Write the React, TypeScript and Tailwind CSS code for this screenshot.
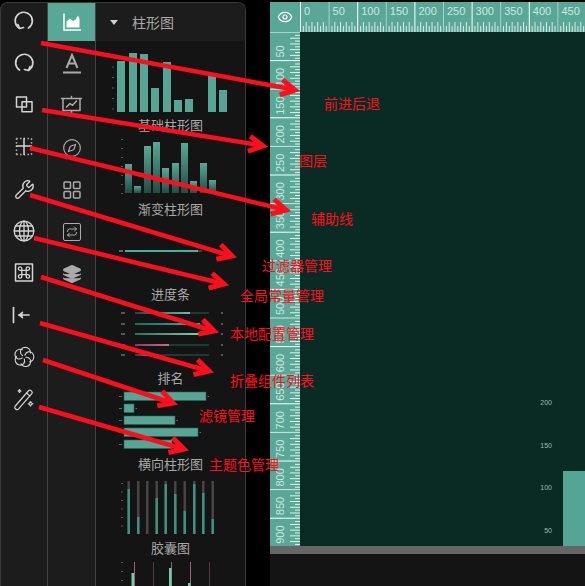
import React from "react";
import { Compass, Eye, Layers, Repeat, Wrench } from "lucide-react";

const TEAL = "#56a595";

const iconProps = {
  width: 24,
  height: 24,
  viewBox: "0 0 24 24",
  fill: "none",
  stroke: "currentColor",
  strokeWidth: 1.5,
  strokeLinecap: "round" as const,
  strokeLinejoin: "round" as const,
};

const UndoIcon = () => (
  <svg {...iconProps} strokeWidth={1.7}>
    <path d="M16.500 19A8.600 8.600 0 1 0 7.500 19.300" />
    <path d="M6 15.600 7.500 19.500l4-1" />
  </svg>
);

const RedoIcon = () => (
  <svg {...iconProps} strokeWidth={1.7}>
    <path d="M7.500 19A8.600 8.600 0 1 1 16.500 19.300" />
    <path d="M18 15.600 16.500 19.500l-4-1" />
  </svg>
);

const CopyIcon = () => (
  <svg {...iconProps}>
    <rect x="4.500" y="4" width="10" height="10" />
    <rect x="10" y="8.800" width="10" height="10" />
  </svg>
);

const GuideIcon = () => (
  <svg {...iconProps}>
    <path d="M12 3.500v16M4.500 11h15" />
    <path
      d="M4.500 3.500h15M4.500 19.500h15M4.500 3.500v16M19.500 3.500v16"
      strokeDasharray="1.200 2.500"
      strokeLinecap="butt"
    />
  </svg>
);

const GlobeIcon = () => (
  <svg {...iconProps} strokeWidth={1.3}>
    <circle cx="12" cy="12" r="9.800" />
    <ellipse cx="12" cy="12" rx="4.500" ry="9.800" />
    <path d="M12 2.200v19.600M2.200 12h19.600M3.500 7h17M3.500 17h17" />
  </svg>
);

const CommandIcon = () => (
  <svg {...iconProps} strokeWidth={1.3}>
    <rect x="3.500" y="3" width="17" height="17" strokeWidth={1.5} />
    <path d="M9.800 9.300h4.400v4.400H9.800zM9.800 9.300H8.500a1.700 1.700 0 1 1 1.300-1.700zM14.200 9.300V7.600a1.700 1.700 0 1 1 1.700 1.700zM14.200 13.700h1.700a1.700 1.700 0 1 1-1.700 1.700zM9.800 13.700v1.700a1.700 1.700 0 1 1-1.700-1.700z" />
  </svg>
);

const CollapseIcon = () => (
  <svg {...iconProps}>
    <path d="M1.500 4.500v15" strokeWidth={1.700} />
    <path d="M17 12H7" strokeWidth={1.700} />
    <path d="M10.500 9.300 7 12l3.500 2.700" fill="currentColor" />
  </svg>
);

const FlowerIcon = () => (
  <svg {...iconProps} strokeWidth={1.1}>
    {[0, 72, 144, 216, 288].map((deg) => (
      <path
        key={deg}
        transform={`rotate(${deg} 12 12)`}
        d="M10.600 10.600C7.500 8.500 7.700 4.400 11 2.800c3-1.300 6.500.3 7.300 3.400.2.800.2 1.300.1 2"
      />
    ))}
  </svg>
);

const WandIcon = () => (
  <svg {...iconProps} strokeWidth={1.200}>
    <path d="M3.300 19 16.300 4a2.200 2.200 0 0 1 3.300 2.900L6.600 21.900a2.200 2.200 0 0 1-3.300-2.900z" />
    <path d="m14.500 6 3.300 2.900" />
    <path d="M18.500 14.500c.4 1.300 1 1.900 2.300 2.300-1.300.4-1.900 1-2.300 2.300-.4-1.300-1-1.900-2.300-2.300 1.300-.4 1.900-1 2.300-2.300z" />
    <path d="M7.500 2.500c.2.900.6 1.300 1.500 1.500-.9.200-1.300.6-1.500 1.500C7.300 4.600 6.900 4.200 6 4c.9-.2 1.300-.6 1.500-1.500z" />
  </svg>
);

const AreaIcon = () => (
  <svg width={20} height={20} viewBox="0 0 20 20" fill="none">
    <path d="M2 1.500V18h17" stroke="white" strokeWidth={1.500} />
    <path d="M4.500 15.500V9.500l3.500-3 3 2.500 2.500-1.500 2.500-4 1.500 3v9z" fill="white" />
  </svg>
);

const TextIcon = () => (
  <svg width={20} height={22} viewBox="0 0 20 22" fill="none" stroke="currentColor">
    <path d="M4.500 15 10 2l5.500 13M6.500 10.500h7" strokeWidth={2} />
    <path d="M1 19.500h18" strokeWidth={1.800} />
  </svg>
);

const BoardIcon = () => (
  <svg {...iconProps} strokeWidth={1.500}>
    <path d="M1.500 4.500h20M3 4.500v12h17v-12M11.500 2.500v2M11.500 16.500v3M8.500 21l3-2 3 2" />
    <path d="m6.500 13 3.500-3.500 2.500 1.800 4-4.300" />
  </svg>
);

const GridIcon = () => (
  <svg {...iconProps} strokeWidth={1.500} width={20} height={20} viewBox="0 0 20 20">
    <rect x="2" y="2" width="6.500" height="6.500" rx="1" />
    <rect x="11.500" y="2" width="6.500" height="6.500" rx="1" />
    <rect x="2" y="11.500" width="6.500" height="6.500" rx="1" />
    <rect x="11.500" y="11.500" width="6.500" height="6.500" rx="1" />
  </svg>
);

const railIcons = [
  <UndoIcon />,
  <RedoIcon />,
  <CopyIcon />,
  <GuideIcon />,
  <Wrench size={21} strokeWidth={1.500} />,
  <GlobeIcon />,
  <CommandIcon />,
  <CollapseIcon />,
  <FlowerIcon />,
  <WandIcon />,
];

const tabIcons = [
  <TextIcon />,
  <BoardIcon />,
  <Compass size={20} strokeWidth={1.400} />,
  <GridIcon />,
  <div className="flex size-[18px] items-center justify-center rounded-[2px] border-[1.5px] border-[#aaaaaa]">
    <Repeat size={12} strokeWidth={2} />
  </div>,
  <Layers size={20} strokeWidth={1.500} fill="#aaaaaa" />,
];

// every chart is drawn in page coordinates, the viewBox crops it to its slot
const Chart = ({ top, height, children }: { top: number; height: number; children: React.ReactNode }) => (
  <svg width={149} height={height} viewBox={`96 ${top} 149 ${height}`} className="block shrink-0">
    {children}
  </svg>
);

const Ticks = ({ x, from, to, step }: { x: number; from: number; to: number; step: number }) => {
  const ys: number[] = [];
  for (let y = from; y <= to; y += step) ys.push(y);
  return (
    <>
      {ys.map((y) => (
        <rect key={y} x={x} y={y} width={2} height={1} fill="#555555" />
      ))}
    </>
  );
};

const basicBars = [
  [117, 61],
  [129, 53],
  [140, 54],
  [151, 88],
  [163, 62],
  [174, 100],
  [185, 99],
  [208, 76],
  [219, 90],
];

const BasicChart = () => (
  <Chart top={41} height={76}>
    <Ticks x={112} from={56} to={112} step={10.500} />
    {basicBars.map(([x, y]) => (
      <rect key={x} x={x} y={y} width={8} height={112 - y} fill={TEAL} />
    ))}
  </Chart>
);

const gradientBars = [
  [125, 164],
  [134, 186],
  [144, 146],
  [153, 142],
  [162, 168],
  [172, 163],
  [181, 143],
  [190, 181],
  [200, 163],
  [209, 180],
];

const GradientChart = () => (
  <Chart top={133} height={68}>
    <defs>
      <linearGradient id="barFade" x1="0" y1="0" x2="0" y2="1">
        <stop offset="0" stopColor="#58a898" />
        <stop offset="1" stopColor="#234c43" />
      </linearGradient>
    </defs>
    <Ticks x={121} from={139} to={193} step={9} />
    {gradientBars.map(([x, y]) => (
      <rect key={x} x={x} y={y} width={7} height={193 - y} fill="url(#barFade)" />
    ))}
  </Chart>
);

const ProgressChart = () => (
  <Chart top={217} height={69}>
    <rect x={119} y={250} width={4} height={2} fill="#666666" />
    <rect x={125} y={250} width={77} height={2} fill="#24463e" />
    <rect x={125} y={250} width={73} height={2} fill="#48b09c" />
  </Chart>
);

const rankRows = [
  [313, 190, "#1f4a42", "#68bdaa"],
  [324, 200, "#1f6a5c", "#33b49e"],
  [334, 200, "#2a6f5e", "#7fd59c"],
  [345, 169, "#7a3f5c", "#d0688f"],
  [355, 147, "#4a2c40", "#a04f7c"],
] as const;

const RankChart = () => (
  <Chart top={302} height={68}>
    <defs>
      {rankRows.map(([y, , from, to]) => (
        <linearGradient key={y} id={`rank${y}`} x1="0" y1="0" x2="1" y2="0">
          <stop offset="0" stopColor={from} />
          <stop offset="1" stopColor={to} />
        </linearGradient>
      ))}
    </defs>
    {rankRows.map(([y, end]) => (
      <g key={y}>
        <rect x={121} y={y - 1} width={4} height={2} fill="#555555" />
        <rect x={135} y={y - 1} width={74} height={2} fill="#1e3a34" />
        <rect x={135} y={y - 1} width={end - 135} height={2} fill={`url(#rank${y})`} />
        <rect x={221} y={y - 1} width={2} height={2} fill="#555555" />
      </g>
    ))}
  </Chart>
);

const hBars = [
  [392, 82],
  [404, 10],
  [416, 51],
  [428, 74],
  [440, 48],
];

const HorizontalChart = () => (
  <Chart top={386} height={70}>
    {hBars.map(([y, w]) => (
      <g key={y}>
        <rect x={119} y={y + 4} width={3} height={1} fill="#666666" />
        <rect x={124} y={y} width={w} height={8.500} fill={TEAL} stroke="#2c6356" strokeWidth={0.600} />
        <rect x={124 + w + 1.500} y={y + 4} width={1.500} height={1} fill="#666666" />
      </g>
    ))}
  </Chart>
);

const capsules = [
  [127.500, 489],
  [137, 517],
  [146, 534],
  [155.500, 498],
  [164.500, 484],
  [174, 494],
  [183.500, 511],
  [193, 484],
  [202, 493],
  [211.500, 519],
];

const CapsuleChart = () => (
  <Chart top={472} height={68}>
    <Ticks x={121} from={483} to={533} step={8.500} />
    {capsules.map(([x, y]) => (
      <g key={x}>
        <rect x={x} y={481} width={2.500} height={53} fill="#454545" />
        <rect x={x} y={y} width={2.500} height={534 - y} fill="#3f9080" />
      </g>
    ))}
  </Chart>
);

const LastChart = () => (
  <Chart top={556} height={30}>
    <Ticks x={121} from={562} to={586} step={9} />
    <rect x={134} y={562} width={1} height={24} fill="#a85c80" />
    <rect x={153} y={562} width={1} height={24} fill="#5a3344" />
    <rect x={171} y={562} width={1} height={24} fill="#a85c80" />
    <rect x={190} y={562} width={1} height={24} fill="#a85c80" />
    <rect x={209} y={562} width={1} height={24} fill="#5a3344" />
    <rect x={131.500} y={573} width={2.500} height={13} fill="#6fd0a8" />
    <rect x={169} y={568} width={2.500} height={18} fill="#6fd0a8" />
    <rect x={188} y={583} width={2.500} height={3} fill="#6fd0a8" />
  </Chart>
);

const ChartLabel = ({ children }: { children: React.ReactNode }) => (
  <div className="h-4 shrink-0 text-center text-[13px] leading-4 text-[#a8a8a8]">{children}</div>
);

const SidePanel = () => (
  <div className="mt-[2px] flex h-[584px] w-[246px] shrink-0 overflow-hidden rounded-t-lg border-t border-r border-l border-[#3a3a3a] bg-[#1c1c1c]">
    <div className="flex w-[46px] shrink-0 flex-col gap-[6px] text-[#d4d4d4]">
      {railIcons.map((icon, i) => (
        <div key={i} className="flex h-9 items-center justify-center">
          {icon}
        </div>
      ))}
    </div>
    <div className="flex w-[49px] shrink-0 flex-col gap-1 border-x border-[#444444] text-[#aaaaaa]">
      <div className="flex h-[38px] items-center justify-center bg-[#58a797]">
        <AreaIcon />
      </div>
      {tabIcons.map((icon, i) => (
        <div key={i} className="flex h-[38px] items-center justify-center">
          {icon}
        </div>
      ))}
    </div>
    <div className="flex min-w-0 flex-1 flex-col bg-[#141414]">
      <div className="flex h-[38px] shrink-0 items-center gap-[14px] bg-[#1c1c1c] pl-[14px]">
        <div className="size-0 border-x-[4px] border-t-[5px] border-x-transparent border-t-[#d0d0d0]" />
        <span className="text-[14px] text-[#a8a8a8]">柱形图</span>
      </div>
      <BasicChart />
      <ChartLabel>基础柱形图</ChartLabel>
      <GradientChart />
      <ChartLabel>渐变柱形图</ChartLabel>
      <ProgressChart />
      <ChartLabel>进度条</ChartLabel>
      <RankChart />
      <ChartLabel>排名</ChartLabel>
      <HorizontalChart />
      <ChartLabel>横向柱形图</ChartLabel>
      <CapsuleChart />
      <ChartLabel>胶囊图</ChartLabel>
      <LastChart />
    </div>
  </div>
);

const STEP = 28.6;
const marks = Array.from({ length: 20 }, (_, i) => i);
const minors = Array.from({ length: 10 }, (_, i) => i).filter((i) => i > 0);

const TopRuler = () => (
  <svg width={285} height={30} className="block">
    {marks.slice(0, 10).map((m) => (
      <g key={m}>
        <rect x={m * STEP} y={0} width={1} height={30} fill={m % 2 ? "#a9d3ca" : "#ffffff"} />
        {minors.map((i) => (
          <rect
            key={i}
            x={m * STEP + i * (STEP / 10)}
            y={i % 2 ? 24 : 20}
            width={1}
            height={i % 2 ? 6 : 10}
            fill="#d8ece7"
          />
        ))}
        <text
          x={m * STEP + 4}
          y={13}
          fontSize={11}
          fill="#cfe6e0"
          fontFamily="'Liberation Sans', sans-serif"
        >
          {m * 50}
        </text>
      </g>
    ))}
  </svg>
);

const LeftRuler = () => (
  <svg width={30} height={514} className="block shrink-0">
    <rect x={0} y={0} width={30} height={1} fill="#a9d3ca" />
    {marks.slice(1, 19).map((m) => (
      <g key={m}>
        <rect x={0} y={m * STEP - 0.500} width={30} height={1} fill={m % 2 ? "#ffffff" : "#cfe6e0"} />
        <text
          transform={`translate(14 ${m * STEP - 3}) rotate(-90)`}
          fontSize={11}
          fill="#cfe6e0"
          fontFamily="'Liberation Sans', sans-serif"
        >
          {m * 50}
        </text>
      </g>
    ))}
    {marks.slice(0, 18).map((m) =>
      minors.map((i) => (
        <rect
          key={`${m}-${i}`}
          x={i % 2 ? 25 : 20}
          y={m * STEP + i * (STEP / 10)}
          width={i % 2 ? 5 : 10}
          height={1}
          fill="#e4f2ee"
        />
      ))
    )}
  </svg>
);

const Workspace = () => (
  <div className="mt-[2px] flex h-[584px] min-w-0 flex-1 flex-col overflow-hidden">
    <div className="flex h-[30px] shrink-0 bg-[#58a797]">
      <div className="flex w-[30px] shrink-0 items-center justify-center text-white">
        <Eye size={16} strokeWidth={1.800} />
      </div>
      <TopRuler />
    </div>
    <div className="flex h-[514px] shrink-0">
      <div className="w-[30px] shrink-0 bg-[#58a797]">
        <LeftRuler />
      </div>
      <div className="flex flex-1 items-end justify-end bg-[#0a2b23]">
        <div className="mr-[11px] flex flex-col items-end gap-[32.7px] pb-[10px] font-['Liberation_Sans',sans-serif] text-[7px] leading-[10px] text-[#a3b5b0]">
          <span>200</span>
          <span>150</span>
          <span>100</span>
          <span>50</span>
        </div>
        <div className="h-[75px] w-[22px] bg-[#55a596]" />
      </div>
    </div>
    <div className="h-2 shrink-0 bg-[#666666]" />
    <div className="flex-1 bg-[#141414]" />
  </div>
);

const arrows = [
  [41, 43, 295, 90],
  [42, 110, 263, 146],
  [30, 148, 286, 210],
  [30, 195, 232, 256],
  [34, 238, 224, 284],
  [41, 277, 214, 331],
  [40, 323, 209, 371],
  [43, 360, 173, 403],
  [39, 407, 184, 449],
];

const notes = [
  { text: "前进后退", cls: "left-[324px] top-[93px]" },
  { text: "图层", cls: "left-[299px] top-[150px]" },
  { text: "辅助线", cls: "left-[311px] top-[208px]" },
  { text: "过滤器管理", cls: "left-[262px] top-[255px]" },
  { text: "全局常量管理", cls: "left-[240px] top-[285px]" },
  { text: "本地配置管理", cls: "left-[230px] top-[323px]" },
  { text: "折叠组件列表", cls: "left-[230px] top-[370px]" },
  { text: "滤镜管理", cls: "left-[199px] top-[405px]" },
  { text: "主题色管理", cls: "left-[209px] top-[454px]" },
];

// barbs of the hand drawn arrow head, 28 degrees off the shaft
const barb = (x1: number, y1: number, x2: number, y2: number, side: number) => {
  const a = Math.atan2(y2 - y1, x2 - x1) + Math.PI + side * 0.5;
  return `${x2 + Math.cos(a) * 16},${y2 + Math.sin(a) * 16}`;
};

const Annotations = () => (
  <>
    <svg width={585} height={586} className="pointer-events-none absolute inset-0">
      {arrows.map(([x1, y1, x2, y2]) => (
        <g key={y1} stroke="#fb0f1e" fill="none">
          <line x1={x1} y1={y1} x2={x2 - 4} y2={y2 - 1} strokeWidth={4.500} />
          <polyline
            points={`${barb(x1, y1, x2, y2, 1)} ${x2},${y2} ${barb(x1, y1, x2, y2, -1)}`}
            strokeWidth={5}
          />
        </g>
      ))}
    </svg>
    {notes.map((n) => (
      <span
        key={n.text}
        className={`absolute text-[14px] leading-5 text-[#fb0f1e] ${n.cls}`}
      >
        {n.text}
      </span>
    ))}
  </>
);

const App = () => {
  return (
    <div className="relative flex h-[586px] w-[585px] gap-6 overflow-hidden bg-black font-['Noto_Sans_CJK_SC','Noto_Sans',sans-serif]">
      <SidePanel />
      <Workspace />
      <Annotations />
    </div>
  );
};

export default App;
